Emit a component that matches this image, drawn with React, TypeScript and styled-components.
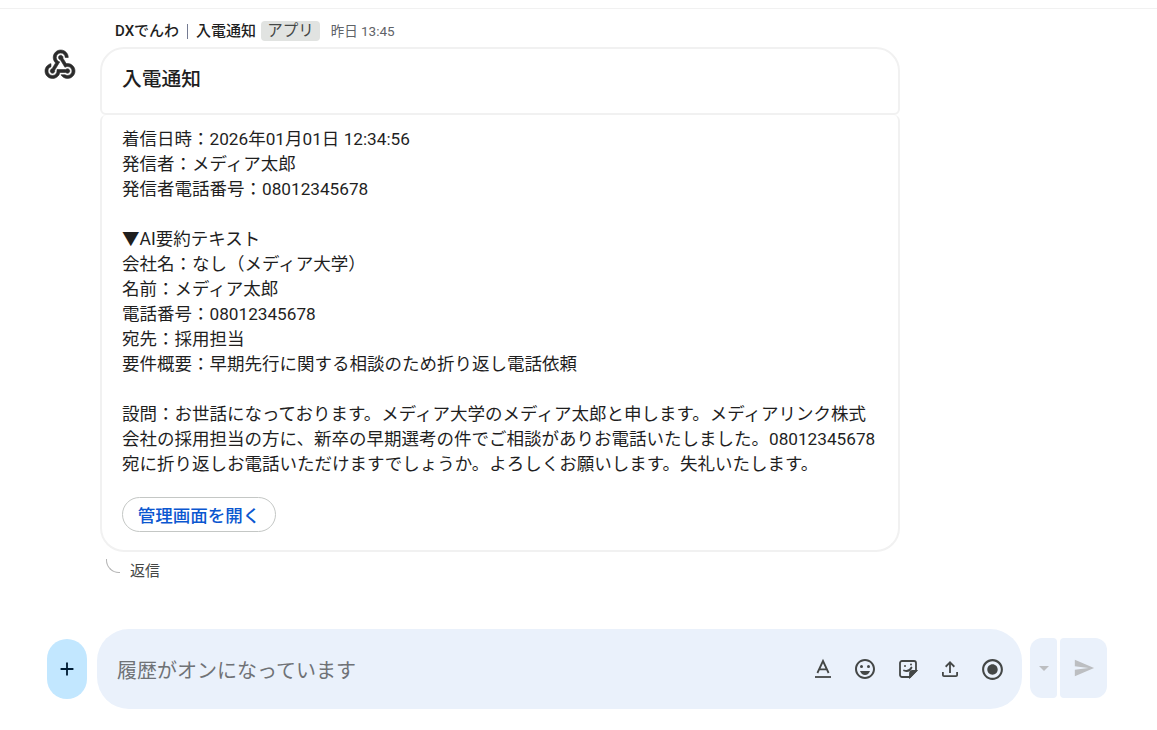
import React from 'react';
import styled, { createGlobalStyle } from 'styled-components';
import {
  MdAdd,
  MdArrowDropDown,
  MdOutlineEmojiEmotions,
  MdRadioButtonChecked,
  MdSend,
} from 'react-icons/md';

const FONT = '"Roboto", "Noto Sans CJK JP", sans-serif';
const CARD_LINE = '#f1f1f1';

const GlobalStyle = createGlobalStyle`
  html, body {
    margin: 0;
    padding: 0;
    background: #ffffff;
    font-family: ${FONT};
    overflow: hidden;
  }
`;

const Page = styled.div`
  width: 1157px;
  height: 730px;
  display: flex;
  flex-direction: column;
`;

const TopRule = styled.div`
  margin-top: 8px;
  height: 1px;
  background: #f1f1f1;
`;

const Thread = styled.div`
  flex: 1;
  display: flex;
  padding-left: 42px;
`;

const AvatarColumn = styled.div`
  width: 58px;
  flex-shrink: 0;
  padding-top: 38px;
  color: #2b2b2b;
`;

const MessageColumn = styled.div`
  width: 800px;
  display: flex;
  flex-direction: column;
`;

const MetaRow = styled.div`
  height: 38px;
  padding: 12px 0 6px 15px;
  box-sizing: border-box;
  display: flex;
  align-items: center;
  align-self: flex-start;
  color: #1f1f1f;
  font-size: 15px;
`;

const SenderName = styled.span`
  line-height: 20px;
  font-weight: 500;
`;

const NameDivider = styled.span`
  width: 1px;
  height: 15px;
  margin: 0 8px;
  background: #747b92;
`;

const AppBadge = styled.span`
  margin-left: 5px;
  padding: 0 6px;
  height: 20px;
  border-radius: 4px;
  background: #e1e3e1;
  color: #444746;
  font-size: 15.5px;
  line-height: 20px;
`;

const Timestamp = styled.span`
  margin: -2px 0 0 11px;
  font-size: 13.5px;
  color: #5f6368;
`;

const Card = styled.div`
  height: 505px;
  display: flex;
  flex-direction: column;
`;

const CardHeader = styled.div`
  height: 68px;
  flex-shrink: 0;
  box-sizing: border-box;
  padding: 17px 20px 0;
  border: 2px solid ${CARD_LINE};
  border-radius: 24px 24px 6px 6px;
  font-size: 19.75px;
  line-height: 28px;
  font-weight: 500;
  color: #1f1f1f;
`;

const CardBody = styled.div`
  flex: 1;
  box-sizing: border-box;
  padding: 12px 20px 0;
  border: 2px solid ${CARD_LINE};
  border-top: 0;
  border-radius: 6px 6px 24px 24px;
  display: flex;
  flex-direction: column;
  align-items: flex-start;
`;

const BodyText = styled.div`
  font-size: 17.5px;
  color: #1f1f1f;
`;

const BodyLine = styled.div`
  height: 25px;
  line-height: 25px;
  white-space: pre;
`;

const Digits = styled.span`
  font-size: 17.2px;
`;

const ActionButton = styled.div`
  margin-top: 20px;
  width: 154px;
  height: 35px;
  box-sizing: border-box;
  border: 1px solid #c4c7c5;
  border-radius: 18px;
  display: flex;
  align-items: center;
  justify-content: center;
  font-size: 17.5px;
  font-weight: 500;
  color: #0b57d0;
`;

const ReplyRow = styled.div`
  padding-left: 6px;
  display: flex;
  align-items: flex-start;
  height: 40px;
`;

const ReplyCurve = styled.div`
  width: 13px;
  height: 13px;
  margin-top: 7px;
  border-left: 1px solid #b4b4b4;
  border-bottom: 1px solid #b4b4b4;
  border-bottom-left-radius: 13px;
`;

const ReplyLabel = styled.span`
  margin-left: 10px;
  margin-top: 9px;
  font-size: 15px;
  line-height: 20px;
  color: #444746;
`;

const Composer = styled.div`
  height: 80px;
  margin-bottom: 21px;
  padding-left: 47px;
  display: flex;
  align-items: center;
`;

const AddButton = styled.div`
  width: 40px;
  height: 60px;
  border-radius: 20px;
  background: #c2e7ff;
  color: #001d35;
  display: flex;
  align-items: center;
  justify-content: center;
`;

const InputPill = styled.div`
  margin-left: 10px;
  width: 925px;
  height: 80px;
  box-sizing: border-box;
  border-radius: 32px;
  background: #eaf1fb;
  padding: 0 8px 0 20px;
  display: flex;
  align-items: center;
`;

const Placeholder = styled.span`
  flex: 1;
  font-size: 20px;
  color: #6f7276;
`;

const ToolIcon = styled.span`
  width: 42.5px;
  display: flex;
  align-items: center;
  justify-content: center;
  color: #444746;
`;

const SendGroup = styled.div`
  margin-left: 8px;
  display: flex;
  gap: 3px;
  height: 60px;
  align-self: center;
  margin-top: -2px;
`;

const SendPart = styled.div<{ $width: number; $left: number; $right: number }>`
  width: ${(p) => p.$width}px;
  border-radius: ${(p) => `${p.$left}px ${p.$right}px ${p.$right}px ${p.$left}px`};
  background: #eaf1fb;
  color: #bcbec1;
  display: flex;
  align-items: center;
  justify-content: center;
`;

const WebhookLogo = () => (
  <svg width="36" height="36" viewBox="0 0 24 24" fill="currentColor" stroke="currentColor" strokeWidth="0.4">
    <path d="M10 15h5.88c.27-.31.67-.5 1.12-.5.83 0 1.5.67 1.5 1.5s-.67 1.5-1.5 1.5c-.44 0-.84-.19-1.12-.5H11.9c-.46 2.28-2.48 4-4.9 4-2.76 0-5-2.24-5-5 0-2.42 1.72-4.44 4-4.9v2.07c-1.16.41-2 1.53-2 2.83 0 1.65 1.35 3 3 3s3-1.35 3-3v-1zm2.5-11c1.65 0 3 1.35 3 3h2c0-2.76-2.24-5-5-5s-5 2.24-5 5c0 1.43.6 2.71 1.55 3.62l-2.35 3.9c-.68.14-1.2.75-1.2 1.48 0 .83.67 1.5 1.5 1.5s1.5-.67 1.5-1.5c0-.16-.02-.31-.07-.45l3.38-5.63C10.49 9.61 9.5 8.42 9.5 7c0-1.65 1.35-3 3-3zm4.5 9c-.64 0-1.23.2-1.72.54l-3.05-5.07C11.53 8.35 11 7.74 11 7c0-.83.67-1.5 1.5-1.5S14 6.17 14 7c0 .15-.02.29-.06.43l2.19 3.65c.28-.05.57-.08.87-.08 2.76 0 5 2.24 5 5s-2.24 5-5 5c-1.85 0-3.47-1.01-4.33-2.5h2.67c.48.32 1.05.5 1.66.5 1.65 0 3-1.35 3-3s-1.35-3-3-3z" />
  </svg>
);

const TextColorIcon = () => (
  <svg width="24" height="24" viewBox="0 0 24 24" fill="none" stroke="currentColor" strokeWidth="1.8">
    <path d="M6.4 16 12 4l5.6 12M8.2 12.4h7.6" />
    <path d="M4 20h16" />
  </svg>
);

const StickerIcon = () => (
  <svg width="20" height="20" viewBox="0 0 20 20" fill="none" stroke="currentColor" strokeWidth="1.8">
    <path d="M12 18H4a2 2 0 0 1-2-2V4a2 2 0 0 1 2-2h12a2 2 0 0 1 2 2v8z" />
    <path d="M12 18v-3.5a2.5 2.5 0 0 1 2.5-2.5H18z" fill="currentColor" />
    <path d="M6 11.5c3 1 6 .2 7.5-3" strokeLinecap="round" />
    <circle cx="7" cy="7" r="1" fill="currentColor" stroke="none" />
    <circle cx="13" cy="5.5" r="1" fill="currentColor" stroke="none" />
  </svg>
);

const UploadIcon = () => (
  <svg width="24" height="24" viewBox="0 0 24 24" fill="currentColor">
    <path d="M11.1 16V7.6L8.3 10.4 7 9l5-5 5 5-1.3 1.4-2.8-2.8V16h-1.8zM6 20c-1.1 0-2-.9-2-2v-3h1.8v3.2h12.4V15H20v3c0 1.1-.9 2-2 2H6z" />
  </svg>
);

const MESSAGE_LINES = [
  '着信日時：2026年01月01日 12:34:56',
  '発信者：メディア太郎',
  '発信者電話番号：08012345678',
  '',
  '▼AI要約テキスト',
  '会社名：なし（メディア大学）',
  '名前：メディア太郎',
  '電話番号：08012345678',
  '宛先：採用担当',
  '要件概要：早期先行に関する相談のため折り返し電話依頼',
  '',
  '設問：お世話になっております。メディア大学のメディア太郎と申します。メディアリンク株式',
  '会社の採用担当の方に、新卒の早期選考の件でご相談がありお電話いたしました。08012345678',
  '宛に折り返しお電話いただけますでしょうか。よろしくお願いします。失礼いたします。',
];

const App: React.FC = () => (
  <Page>
    <GlobalStyle />
    <TopRule />
    <Thread>
      <AvatarColumn>
        <WebhookLogo />
      </AvatarColumn>
      <MessageColumn>
        <MetaRow>
          <SenderName>DXでんわ</SenderName>
          <NameDivider />
          <SenderName>入電通知</SenderName>
          <AppBadge>アプリ</AppBadge>
          <Timestamp>昨日 13:45</Timestamp>
        </MetaRow>
        <Card>
          <CardHeader>入電通知</CardHeader>
          <CardBody>
            <BodyText>
              {MESSAGE_LINES.map((line, i) => (
                <BodyLine key={i}>
                  {line.split(/([0-9][0-9: ]*)/).map((part, j) => (j % 2 ? <Digits key={j}>{part}</Digits> : part))}
                </BodyLine>
              ))}
            </BodyText>
            <ActionButton>管理画面を開く</ActionButton>
          </CardBody>
        </Card>
        <ReplyRow>
          <ReplyCurve />
          <ReplyLabel>返信</ReplyLabel>
        </ReplyRow>
      </MessageColumn>
    </Thread>
    <Composer>
      <AddButton>
        <MdAdd size={22} />
      </AddButton>
      <InputPill>
        <Placeholder>履歴がオンになっています</Placeholder>
        <ToolIcon>
          <TextColorIcon />
        </ToolIcon>
        <ToolIcon>
          <MdOutlineEmojiEmotions size={24} />
        </ToolIcon>
        <ToolIcon>
          <StickerIcon />
        </ToolIcon>
        <ToolIcon>
          <UploadIcon />
        </ToolIcon>
        <ToolIcon>
          <MdRadioButtonChecked size={25} />
        </ToolIcon>
      </InputPill>
      <SendGroup>
        <SendPart $width={27} $left={12} $right={4}>
          <MdArrowDropDown size={24} />
        </SendPart>
        <SendPart $width={47} $left={4} $right={12}>
          <MdSend size={22} />
        </SendPart>
      </SendGroup>
    </Composer>
  </Page>
);

export default App;
